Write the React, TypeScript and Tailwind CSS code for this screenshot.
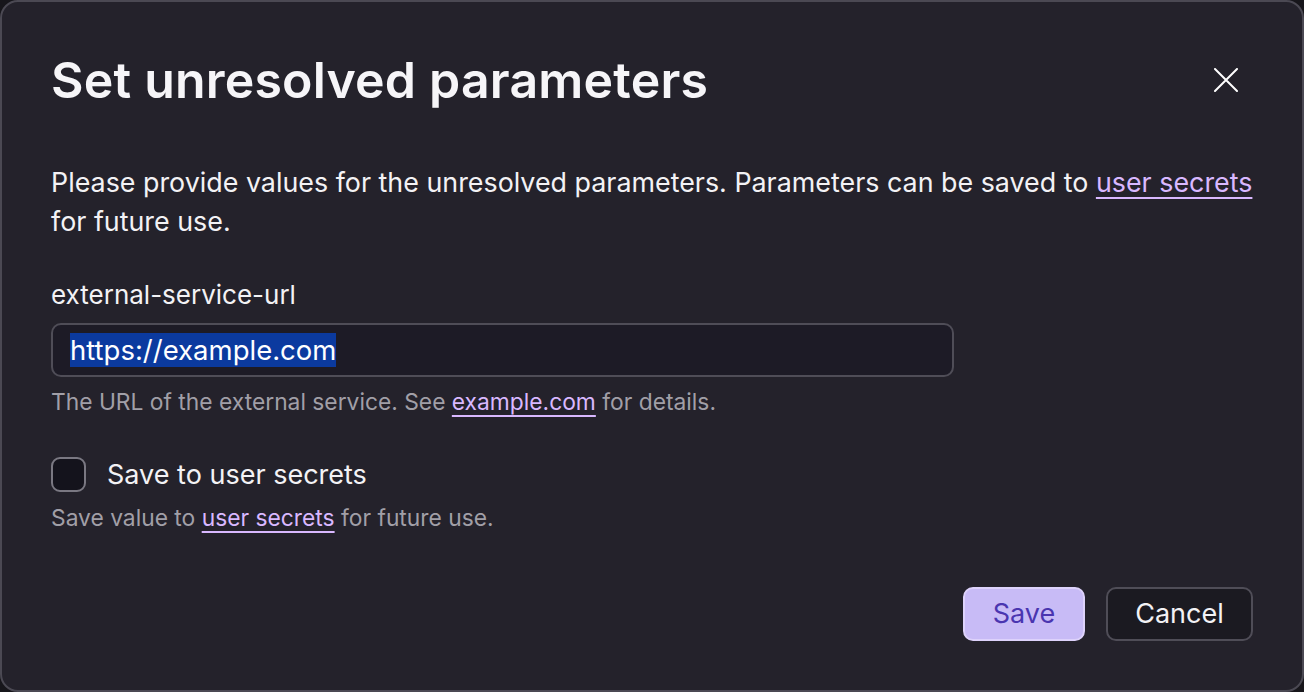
import React from 'react';

const font = { fontFamily: 'Inter, "Noto Sans", sans-serif' };

const Link: React.FC<{ children: React.ReactNode }> = ({ children }) => (
  <a href="#" className="text-[#d9b8ff] underline underline-offset-[5px] decoration-[1.5px]">
    {children}
  </a>
);

const App: React.FC = () => {
  return (
    <div className="h-[692px] w-full bg-[#17161b]" style={font}>
      <div className="h-full w-full rounded-[18px] border-2 border-[#4b4953] bg-[#24222b] px-[49px] pt-[50px] text-white">
        <div className="flex h-[56px] items-center justify-between">
          <h1 className="text-[50px] font-semibold leading-[56px] tracking-[0.2px] text-[#f6f5f8]">
            Set unresolved parameters
          </h1>
          <button className="mr-[7px] flex h-[40px] w-[40px] items-center justify-center text-white">
            <svg width="24" height="24" viewBox="0 0 24 24" fill="none" stroke="currentColor" strokeWidth="2" strokeLinecap="round">
              <path d="M1 1L23 23M23 1L1 23" />
            </svg>
          </button>
        </div>

        <p className="mt-[55px] text-[26.85px] leading-[39px] text-[#f3f2f5]">
          <span className="whitespace-nowrap">
            Please provide values for the unresolved parameters. Parameters can be saved to <Link>user secrets</Link>
          </span>
          <br />
          for future use.
        </p>

        <div className="mt-[38px] text-[26px] leading-[32px] text-[#f3f2f5]">external-service-url</div>

        <div className="mt-[12px] flex h-[54px] w-[903px] items-center rounded-[10px] border-2 border-[#4f4d57] bg-[#1d1b26] px-[17px]">
          <span className="bg-[#0b3a9f] text-[27.5px] leading-[34px] text-white">https://example.com</span>
        </div>

        <p className="mt-[11px] text-[22.8px] leading-[28px] text-[#a19fa7]">
          The URL of the external service. See <Link>example.com</Link> for details.
        </p>

        <label className="mt-[41px] flex h-[35px] items-center gap-[21px]">
          <span className="h-[35px] w-[35px] rounded-[9px] border-2 border-[#7a7882] bg-[#14131c]" />
          <span className="text-[27px] leading-[32px] text-[#f3f2f5]">Save to user secrets</span>
        </label>

        <p className="mt-[12px] text-[22.8px] leading-[28px] text-[#a19fa7]">
          Save value to <Link>user secrets</Link> for future use.
        </p>

        <div className="mt-[55px] flex justify-end gap-[21px]">
          <button className="h-[54px] w-[122px] rounded-[10px] border-2 border-[#ddd2fb] bg-[#c8bbf6] text-[27px] text-[#4a35b0]">
            Save
          </button>
          <button className="h-[54px] w-[147px] rounded-[10px] border-2 border-[#4f4d57] bg-[#1b1a21] text-[27px] text-[#f3f2f5]">
            Cancel
          </button>
        </div>
      </div>
    </div>
  );
};

export default App;
